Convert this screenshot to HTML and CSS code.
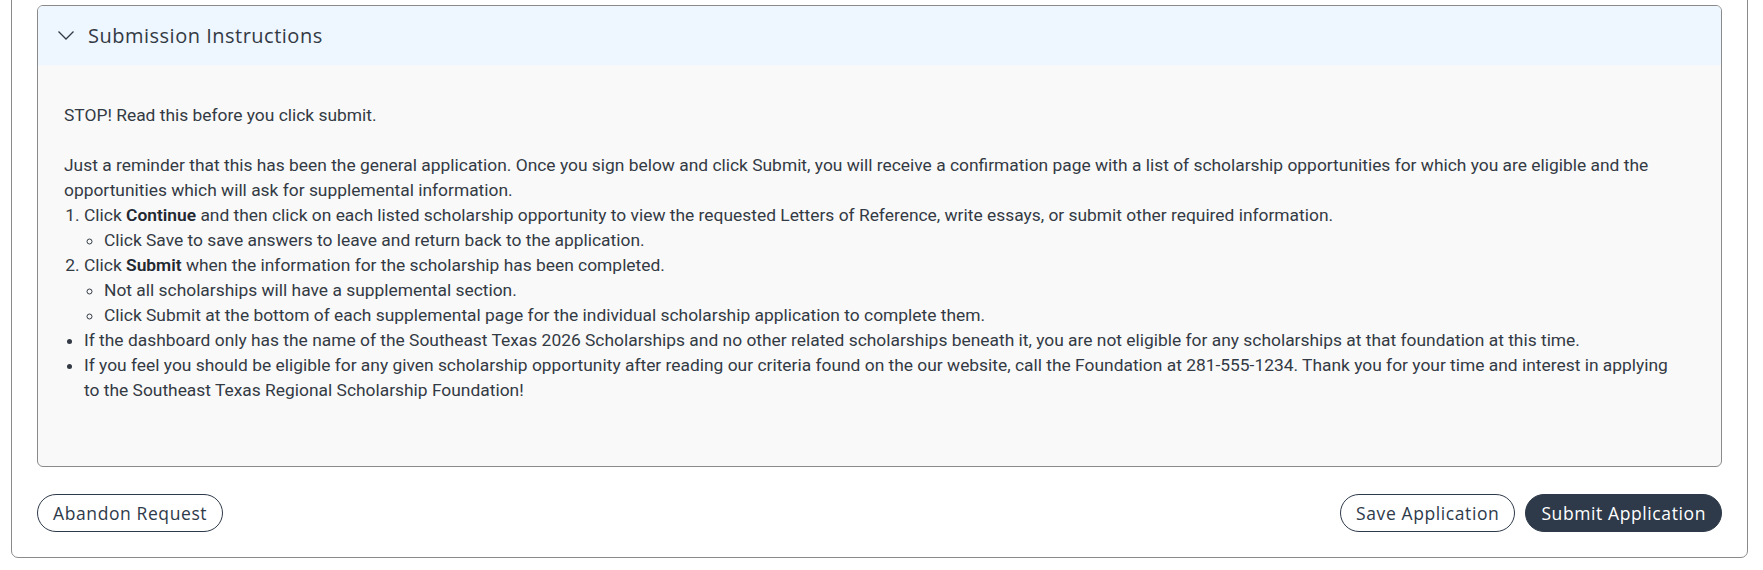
FILE: index.html
```html
<!DOCTYPE html>
<html lang="en">
<head>
    <meta charset="UTF-8">
    <meta name="viewport" content="width=device-width, initial-scale=1.0">
    <title>Application - Submission Instructions</title>
    <link rel="stylesheet" href="styles.css">
</head>
<body>
    <div class="page">
        <div class="application-card">
            <section class="accordion">
                <button class="accordion-header" aria-expanded="true">
                    <svg class="chevron" width="16" height="9" viewBox="0 0 16 9" aria-hidden="true">
                        <polyline points="0.5,0.5 8,8 15.5,0.5" fill="none" stroke="#333b47" stroke-width="1.3"/>
                    </svg>
                    <span class="accordion-title">Submission Instructions</span>
                </button>
                <div class="accordion-body">
                    <p>STOP! Read this before you click submit.<br><br>Just a reminder that this has been the general application. Once you sign below and click Submit, you will receive a confirmation page with a list of scholarship opportunities for which you are eligible and the opportunities which will ask for supplemental information.</p>
                    <ol>
                        <li>Click <strong>Continue</strong> and then click on each listed scholarship opportunity to view the requested Letters of Reference, write essays, or submit other required information.
                            <ul>
                                <li>Click Save to save answers to leave and return back to the application.</li>
                            </ul>
                        </li>
                        <li>Click <strong>Submit</strong> when the information for the scholarship has been completed.
                            <ul>
                                <li>Not all scholarships will have a supplemental section.</li>
                                <li>Click Submit at the bottom of each supplemental page for the individual scholarship application to complete them.</li>
                            </ul>
                        </li>
                    </ol>
                    <ul>
                        <li>If the dashboard only has the name of the Southeast Texas 2026 Scholarships and no other related scholarships beneath it, you are not eligible for any scholarships at that foundation at this time.</li>
                        <li>If you feel you should be eligible for any given scholarship opportunity after reading our criteria found on the our website, call the Foundation at 281-555-1234. Thank you for your time and interest in applying to the Southeast Texas Regional Scholarship Foundation!</li>
                    </ul>
                </div>
            </section>

            <div class="actions">
                <button class="btn btn-outline">Abandon Request</button>
                <div class="actions-right">
                    <button class="btn btn-outline">Save Application</button>
                    <button class="btn btn-primary">Submit Application</button>
                </div>
            </div>
        </div>
    </div>
</body>
</html>
```

FILE: styles.css
```css
body {
    margin: 0;
    padding: 0;
    background-color: #ffffff;
    font-family: Roboto, "Liberation Sans", sans-serif;
    color: #333a44;
}

.page {
    padding: 0 15px 0 11px;
}

.application-card {
    margin-top: -20px;
    padding: 24px 25px 25px;
    border: 1px solid #8a8a8a;
    border-radius: 7px;
}

.accordion {
    border: 1px solid #8a8a8a;
    border-radius: 6px;
    overflow: hidden;
    background-color: #f9f9f9;
}

.accordion-header {
    display: flex;
    align-items: center;
    gap: 14px;
    width: 100%;
    height: 59px;
    padding: 0 0 0 20px;
    border: none;
    background-color: #eef6ff;
    cursor: pointer;
    text-align: left;
}

.chevron {
    display: block;
    flex-shrink: 0;
}

.accordion-title {
    font-family: "Open Sans", "Noto Sans", sans-serif;
    font-size: 20px;
    letter-spacing: 0.5px;
    color: #333a44;
}

.accordion-body {
    padding: 38px 40px 63px 26px;
    font-size: 17.4px;
    line-height: 25px;
}

.accordion-body p {
    margin: 0;
}

.accordion-body ol,
.accordion-body ul {
    margin: 0;
    padding-left: 20px;
}

.accordion-body ol ul {
    list-style-type: circle;
}

.accordion-body strong {
    font-weight: 600;
    color: #222831;
}

/* Footer buttons */
.actions {
    display: flex;
    justify-content: space-between;
    align-items: center;
    margin-top: 27px;
}

.actions-right {
    display: flex;
    gap: 10px;
}

.btn {
    height: 38px;
    padding: 0 15px;
    border-radius: 19px;
    font-family: "Open Sans", "Noto Sans", sans-serif;
    font-size: 17.5px;
    letter-spacing: 0.6px;
    cursor: pointer;
}

.btn-outline {
    background-color: #ffffff;
    border: 1px solid #2e3a4a;
    color: #2e3a4a;
}

.btn-primary {
    background-color: #2e3a4a;
    border: 1px solid #2e3a4a;
    color: #ffffff;
    font-weight: 500;
}
```
